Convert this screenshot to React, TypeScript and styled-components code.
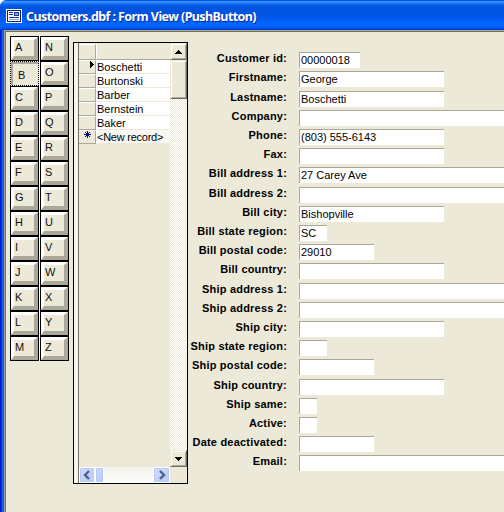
import React from "react";
import styled, { createGlobalStyle } from "styled-components";

const Global = createGlobalStyle`
  * { box-sizing: border-box; }
  html, body { margin: 0; padding: 0; overflow: hidden; }
  body { font: 11px "Liberation Sans", Arial, sans-serif; color: #000; background: #fff; }
`;

const Window = styled.div`
  width: 504px;
  height: 512px;
  overflow: hidden;
  display: flex;
  flex-direction: column;
  background: #fff;
`;

const TitleBar = styled.header`
  flex: none;
  height: 30px;
  display: flex;
  align-items: flex-start;
  padding: 9px 0 0 6px;
  border-top-left-radius: 6px;
  background: linear-gradient(#0058e6 0, #0058e6 1px, #3a93ff 1px, #2c86fb 3px, #0a62ee 4px, #0054e0 7px, #0053e1 14px, #005cf5 20px, #0066ff 24px, #0064fb 27px, #0046d8 29px, #003dd0 30px);
`;

const Title = styled.h1`
  margin: -1px 0 0 4px;
  font: bold 12.5px/18px "Noto Sans", "DejaVu Sans", sans-serif;
  letter-spacing: -0.58px;
  color: #fff;
  text-shadow: 1px 1px 0 #0a2e94;
  white-space: nowrap;
`;

const Client = styled.div`
  flex: 1;
  display: flex;
  min-height: 0;
  background: #ece9d8;
`;

const Frame = styled.div`
  flex: none;
  width: 4px;
  background: linear-gradient(90deg, #0019cf 0, #0019cf 1px, #0831d9 1px, #0831d9 2px, #166aee 2px, #166aee 3px, #0855dd 3px);
`;

const Body = styled.main`
  flex: 1;
  min-width: 0;
  display: flex;
  align-items: flex-start;
  border: solid #aca899;
  border-width: 1px 0 0 1px;
  box-shadow: inset 1px 1px 0 #716f64;
  padding: 5px 0 0 5px;
`;

const Letters = styled.nav`
  flex: none;
  display: grid;
  grid-template-columns: 29px 29px;
  grid-template-rows: repeat(13, 25px);
  grid-auto-flow: column;
  column-gap: 1px;
  background: #fff;
`;

const LetterButton = styled.button<{ $down: boolean }>`
  appearance: none;
  margin: 0;
  height: 25px;
  padding: ${(p) => (p.$down ? "3px 0 0 4px" : "0")};
  border: 1px ${(p) => (p.$down ? "dotted" : "solid")} #000;
  border-radius: 0;
  background: #ece9d8;
  font: 11px/14px "Liberation Sans", Arial, sans-serif;
  color: #111;
  text-align: left;
  display: flex;
  box-shadow: ${(p) => (p.$down ? "inset 2px 2px 0 #aca899" : "none")};
`;

const Bevel = styled.span<{ $down: boolean }>`
  flex: 1;
  align-self: stretch;
  border: solid;
  border-width: ${(p) => (p.$down ? "0" : "3px 4px 4px 3px")};
  border-color: #fff #aca899 #aca899 #fff;
  padding: ${(p) => (p.$down ? "3px 0 0 3px" : "0 0 0 1px")};
`;

const Browser = styled.section`
  flex: none;
  margin: 6px 0 0 4px;
  width: 115px;
  height: 442px;
  border: 1px solid #000;
  display: grid;
  grid-template-columns: 96px 17px;
  grid-template-rows: 424px 16px;
`;

const Gutter = styled.div`
  grid-area: 1 / 1 / 3 / 2;
  border-left: 4px solid #f6f4ec;
  box-shadow: inset 1px 0 0 #716f64;
  padding-left: 1px;
  padding-top: 1px;
`;

const Record = styled.div<{ $head?: boolean }>`
  display: grid;
  grid-template-columns: 17px 1fr;
  height: ${(p) => (p.$head ? "16px" : "14px")};
`;

const Marker = styled.div<{ $raise?: boolean }>`
  border: solid;
  border-width: 1px 1px 1px 0;
  border-color: #fff #aca899 #aca899 #fff;
  display: flex;
  align-items: center;
  justify-content: flex-end;
  padding-bottom: ${(p) => (p.$raise ? "5px" : "0")};
`;

const Name = styled.div<{ $kind: "head" | "row" | "new" }>`
  border-left: 1px solid #fff;
  font: 11px/14px "Liberation Sans", Arial, sans-serif;
  letter-spacing: ${(p) => (p.$kind === "new" ? "-0.25px" : "0")};
  white-space: nowrap;
  height: ${(p) => (p.$kind === "head" ? "16px" : "14px")};
  border-bottom: 1px solid ${(p) => (p.$kind === "head" ? "#aca899" : "#ece9d8")};
  background: ${(p) => (p.$kind === "head" ? "#ece9d8" : p.$kind === "new" ? "#f8f7f2" : "#fff")};
`;

const VScroll = styled.div`
  grid-area: 1 / 2 / 2 / 3;
  display: grid;
  grid-template-rows: 17px 39px 1fr 17px;
  background: repeating-conic-gradient(#fff 0 25%, #ece9d8 0 50%) 0 0 / 2px 2px;
`;

const Classic = styled.div`
  background: #ece9d8;
  border: 1px solid;
  border-color: #ece9d8 #716f64 #716f64 #ece9d8;
  box-shadow: inset 1px 1px 0 #fff, inset -1px -1px 0 #aca899;
  display: flex;
  align-items: center;
  justify-content: center;
`;

const HScroll = styled.div`
  grid-area: 2 / 1 / 3 / 2;
  margin-left: 5px;
  display: grid;
  grid-template-columns: 16px 9px 1fr 17px;
  background: linear-gradient(#f2f1ec, #fdfdfb);
`;

const LunaButton = styled.div`
  border: 1px solid #fff;
  border-radius: 2px;
  background: linear-gradient(135deg, #cddcff, #b8cbf8);
  box-shadow: inset 0 0 0 1px #b5c9f4;
  display: flex;
  align-items: center;
  justify-content: center;
`;

const Form = styled.form`
  flex: 1;
  min-width: 0;
  padding-top: 16px;
`;

const Field = styled.label<{ $tall: boolean }>`
  display: grid;
  grid-template-columns: 99px minmax(0, 1fr);
  column-gap: 12px;
  height: ${(p) => (p.$tall ? 20 : 19)}px;
`;

const Caption = styled.span`
  text-align: right;
  font: bold 11px/12px "Liberation Sans", Arial, sans-serif;
  letter-spacing: 0.2px;
  white-space: nowrap;
`;

const Entry = styled.span<{ $w: number }>`
  width: ${(p) => p.$w}px;
  height: 16px;
  padding: 1px 0 0 1px;
  background: #fff;
  border: solid #aca899;
  border-width: 1px 0 0 1px;
  font: 11px/13px "Liberation Sans", Arial, sans-serif;
  white-space: nowrap;
`;

const fields: [string, string, number, boolean?][] = [
  ["Customer id:", "00000018", 61],
  ["Firstname:", "George", 145, true],
  ["Lastname:", "Boschetti", 145],
  ["Company:", "", 215],
  ["Phone:", "(803) 555-6143", 145],
  ["Fax:", "", 145],
  ["Bill address 1:", "27 Carey Ave", 215, true],
  ["Bill address 2:", "", 215],
  ["Bill city:", "Bishopville", 145],
  ["Bill state region:", "SC", 28],
  ["Bill postal code:", "29010", 75],
  ["Bill country:", "", 145, true],
  ["Ship address 1:", "", 215],
  ["Ship address 2:", "", 215],
  ["Ship city:", "", 145],
  ["Ship state region:", "", 28],
  ["Ship postal code:", "", 75, true],
  ["Ship country:", "", 145],
  ["Ship same:", "", 18],
  ["Active:", "", 18],
  ["Date deactivated:", "", 75],
  ["Email:", "", 215],
];

const names = ["Boschetti", "Burtonski", "Barber", "Bernstein", "Baker"];

const FormIcon = () => (
  <svg width="16" height="14" viewBox="0 0 16 14" shapeRendering="crispEdges">
    <path fill="#fff" d="M0 0h16v14H0z" />
    <path fill="#0a246a" d="M1 1h14v1H1zM1 12h14v1H1zM1 1h1v12H1zM14 1h1v12h-1z" />
    <path fill="#16358c" d="M3 3h4v1H3zM3 5h4v1H3zM8 3h5v1H8zM8 6h5v1H8zM8 3h1v4H8zM12 3h1v4h-1zM3 8h10v1H3z" />
    <path fill="#8fa3d8" d="M9 4h3v2H9zM3 10h10v1H3z" />
  </svg>
);

const Triangle = ({ down }: { down?: boolean }) => (
  <svg width="7" height="4" viewBox="0 0 7 4" shapeRendering="crispEdges">
    <path d={down ? "M0 0h7v1H0zM1 1h5v1H1zM2 2h3v1H2zM3 3h1v1H3z" : "M3 0h1v1H3zM2 1h3v1H2zM1 2h5v1H1zM0 3h7v1H0z"} />
  </svg>
);

const Chevron = ({ right }: { right?: boolean }) => (
  <svg width="8" height="10" viewBox="0 0 8 10">
    <path d={right ? "M2 1l4 4-4 4" : "M6 1L2 5l4 4"} fill="none" stroke="#4d6185" strokeWidth="2.4" />
  </svg>
);

export default function App() {
  return (
    <Window>
      <Global />
      <TitleBar>
        <FormIcon />
        <Title>Customers.dbf : Form View (PushButton)</Title>
      </TitleBar>
      <Client>
        <Frame />
        <Body>
          <Letters>
            {"ABCDEFGHIJKLMNOPQRSTUVWXYZ".split("").map((l) => (
              <LetterButton key={l} $down={l === "B"}>
                <Bevel $down={l === "B"}>{l}</Bevel>
              </LetterButton>
            ))}
          </Letters>
          <Browser>
            <Gutter>
              <Record $head>
                <Marker />
                <Name $kind="head" />
              </Record>
              {names.map((n, i) => (
                <Record key={n}>
                  <Marker $raise={i === 0}>
                    {i === 0 && (
                      <svg width="5" height="7" viewBox="0 0 5 7" shapeRendering="crispEdges">
                        <path d="M0 0h1v7H0zM1 1h1v5H1zM2 2h1v3H2zM3 3h1v1H3z" />
                      </svg>
                    )}
                  </Marker>
                  <Name $kind="row">{n}</Name>
                </Record>
              ))}
              <Record>
                <Marker $raise>
                  <svg width="11" height="7" viewBox="0 0 11 7">
                    <path d="M3.5 0v7M0 3.5h7M1 1l5 5M6 1L1 6" stroke="#000080" />
                  </svg>
                </Marker>
                <Name $kind="new">&lt;New record&gt;</Name>
              </Record>
            </Gutter>
            <VScroll>
              <Classic><Triangle /></Classic>
              <Classic />
              <div />
              <Classic><Triangle down /></Classic>
            </VScroll>
            <HScroll>
              <LunaButton><Chevron /></LunaButton>
              <LunaButton />
              <div />
              <LunaButton><Chevron right /></LunaButton>
            </HScroll>
          </Browser>
          <Form>
            {fields.map(([label, value, width, tall]) => (
              <Field key={label} $tall={!!tall}>
                <Caption>{label}</Caption>
                <Entry $w={width}>{value}</Entry>
              </Field>
            ))}
          </Form>
        </Body>
      </Client>
    </Window>
  );
}
